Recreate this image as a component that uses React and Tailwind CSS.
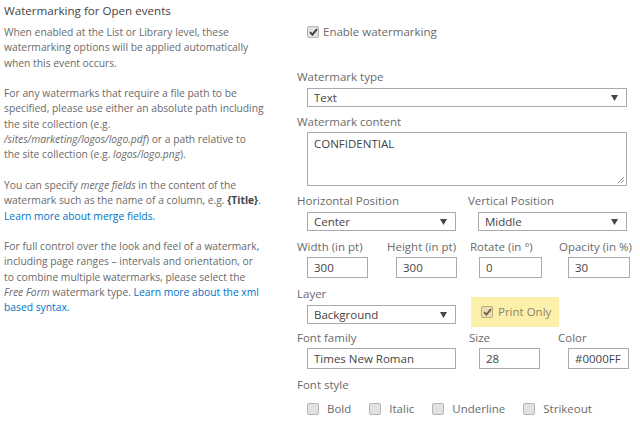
import React from 'react';

function CheckBox({ checked, dim }) {
  return (
    <span
      className={`inline-flex w-[12px] h-[12px] shrink-0 items-center justify-center rounded-[2px] border ${
        dim ? 'border-[#b8ae80] bg-[#e8dfb4]' : 'border-[#b4b4b4] bg-[#e2e2e2]'
      }`}
    >
      {checked && (
        <svg width="9" height="8" viewBox="0 0 9 8">
          <path d="M1 4.2 L3.4 6.6 L8 1.2" fill="none" stroke={dim ? '#6d6442' : '#3c3c3c'} strokeWidth="1.9" />
        </svg>
      )}
    </span>
  );
}

function Label({ children, className = '' }) {
  return <div className={`text-[11.5px] leading-[16px] text-[#6a6a6a] whitespace-nowrap ${className}`}>{children}</div>;
}

function Select({ value, w, className = '' }) {
  return (
    <div className={`flex h-[19px] items-center justify-between border border-[#ababab] bg-white pl-[6px] pr-[8px] ${w} ${className}`}>
      <span className="text-[11.5px] text-[#444]">{value}</span>
      <svg width="7" height="6" viewBox="0 0 7 6">
        <path d="M0 0 H7 L3.5 6 Z" fill="#444" />
      </svg>
    </div>
  );
}

function Field({ value, w, className = '' }) {
  return (
    <div className={`flex h-[21px] items-center border border-[#ababab] bg-white pl-[6px] ${w} ${className}`}>
      <span className="text-[11.5px] text-[#444] whitespace-nowrap">{value}</span>
    </div>
  );
}

function StyleOption({ label }) {
  return (
    <div className="flex items-center gap-[8px]">
      <CheckBox />
      <span className="text-[11.5px] leading-[16px] text-[#6a6a6a]">{label}</span>
    </div>
  );
}

const link = 'text-[#0072c6]';

export default function App() {
  return (
    <div className="flex w-[640px] h-[425px] overflow-hidden bg-white font-['Open_Sans','Noto_Sans',sans-serif]">
      {/* description column */}
      <div className="w-[290px] shrink-0 pl-[4px] pt-[3px] whitespace-nowrap">
        <div className="text-[11.6px] leading-[16px] text-[#444]">Watermarking for Open events</div>
        <div className="mt-[6px] text-[10.3px] leading-[15.3px] text-[#6a6a6a]">
          <p>
            When enabled at the List or Library level, these
            <br />
            watermarking options will be applied automatically
            <br />
            when this event occurs.
          </p>
          <p className="mt-[15.3px]">
            For any watermarks that require a file path to be
            <br />
            specified, please use either an absolute path including
            <br />
            the site collection (e.g.
            <br />
            <i>/sites/marketing/logos/logo.pdf</i>) or a path relative to
            <br />
            the site collection (e.g. <i>logos/logo.png</i>).
          </p>
          <p className="mt-[15.3px]">
            You can specify <i>merge fields</i> in the content of the
            <br />
            watermark such as the name of a column, e.g. <b className="text-[#444]">{'{Title}'}</b>.
            <br />
            <span className={link}>Learn more about merge fields.</span>
          </p>
          <p className="mt-[15.3px]">
            For full control over the look and feel of a watermark,
            <br />
            including page ranges – intervals and orientation, or
            <br />
            to combine multiple watermarks, please select the
            <br />
            <i>Free Form</i> watermark type. <span className={link}>Learn more about the xml</span>
            <br />
            <span className={link}>based syntax.</span>
          </p>
        </div>
      </div>

      {/* settings column */}
      <div className="flex-1 pl-[7px]">
        <div className="mt-[24px] ml-[10px] flex h-[16px] items-center gap-[4px]">
          <CheckBox checked />
          <span className="text-[11.5px] text-[#6a6a6a]">Enable watermarking</span>
        </div>

        <Label className="mt-[29px]">Watermark type</Label>
        <Select value="Text" w="w-[320px]" className="mt-[3px] ml-[10px]" />

        <Label className="mt-[7px]">Watermark content</Label>
        <div className="relative mt-[2px] ml-[10px] h-[54px] w-[320px] border border-[#ababab] bg-white px-[6px] pt-[3px]">
          <div className="text-[11.5px] leading-[16px] text-[#444]">CONFIDENTIAL</div>
          <svg className="absolute right-[1px] bottom-[1px]" width="8" height="8" viewBox="0 0 8 8">
            <path d="M7 1 L1 7 M7 4 L4 7" stroke="#999" strokeWidth="1" />
          </svg>
        </div>

        <div className="mt-[7px] flex">
          <div className="w-[171px]">
            <Label>Horizontal Position</Label>
            <Select value="Center" w="w-[149px]" className="mt-[3px] ml-[10px]" />
          </div>
          <div>
            <Label>Vertical Position</Label>
            <Select value="Middle" w="w-[149px]" className="mt-[3px] ml-[10px]" />
          </div>
        </div>

        <div className="mt-[8px] flex">
          <div className="w-[90px]">
            <Label>Width (in pt)</Label>
            <Field value="300" w="w-[61px]" className="mt-[2px] ml-[10px]" />
          </div>
          <div className="w-[83px]">
            <Label>Height (in pt)</Label>
            <Field value="300" w="w-[61px]" className="mt-[2px] ml-[9px]" />
          </div>
          <div className="w-[89px]">
            <Label>Rotate (in °)</Label>
            <Field value="0" w="w-[63px]" className="mt-[2px] ml-[9px]" />
          </div>
          <div>
            <Label>Opacity (in %)</Label>
            <Field value="30" w="w-[62px]" className="mt-[2px] ml-[9px]" />
          </div>
        </div>

        <div className="mt-[8px] flex">
          <div className="w-[174px]">
            <Label>Layer</Label>
            <Select value="Background" w="w-[149px]" className="mt-[3px] ml-[10px]" />
          </div>
          <div className="mt-[11px] flex h-[30px] w-[88px] items-center gap-[5px] bg-[#fcf0ab] pl-[10px]">
            <CheckBox checked dim />
            <span className="text-[11.5px] text-[#8a8464]">Print Only</span>
          </div>
        </div>

        <div className="mt-[3px] flex">
          <div className="w-[171px]">
            <Label>Font family</Label>
            <Field value="Times New Roman" w="w-[149px]" className="mt-[2px] ml-[10px]" />
          </div>
          <div className="w-[90px]">
            <Label className="ml-[1px]">Size</Label>
            <Field value="28" w="w-[61px]" className="mt-[2px] ml-[11px]" />
          </div>
          <div>
            <Label>Color</Label>
            <Field value="#0000FF" w="w-[61px]" className="mt-[2px] ml-[10px]" />
          </div>
        </div>

        <Label className="mt-[8px]">Font style</Label>
        <div className="mt-[8px] ml-[10px] flex h-[16px] items-center gap-[18px]">
          <StyleOption label="Bold" />
          <StyleOption label="Italic" />
          <StyleOption label="Underline" />
          <StyleOption label="Strikeout" />
        </div>
      </div>
    </div>
  );
}
